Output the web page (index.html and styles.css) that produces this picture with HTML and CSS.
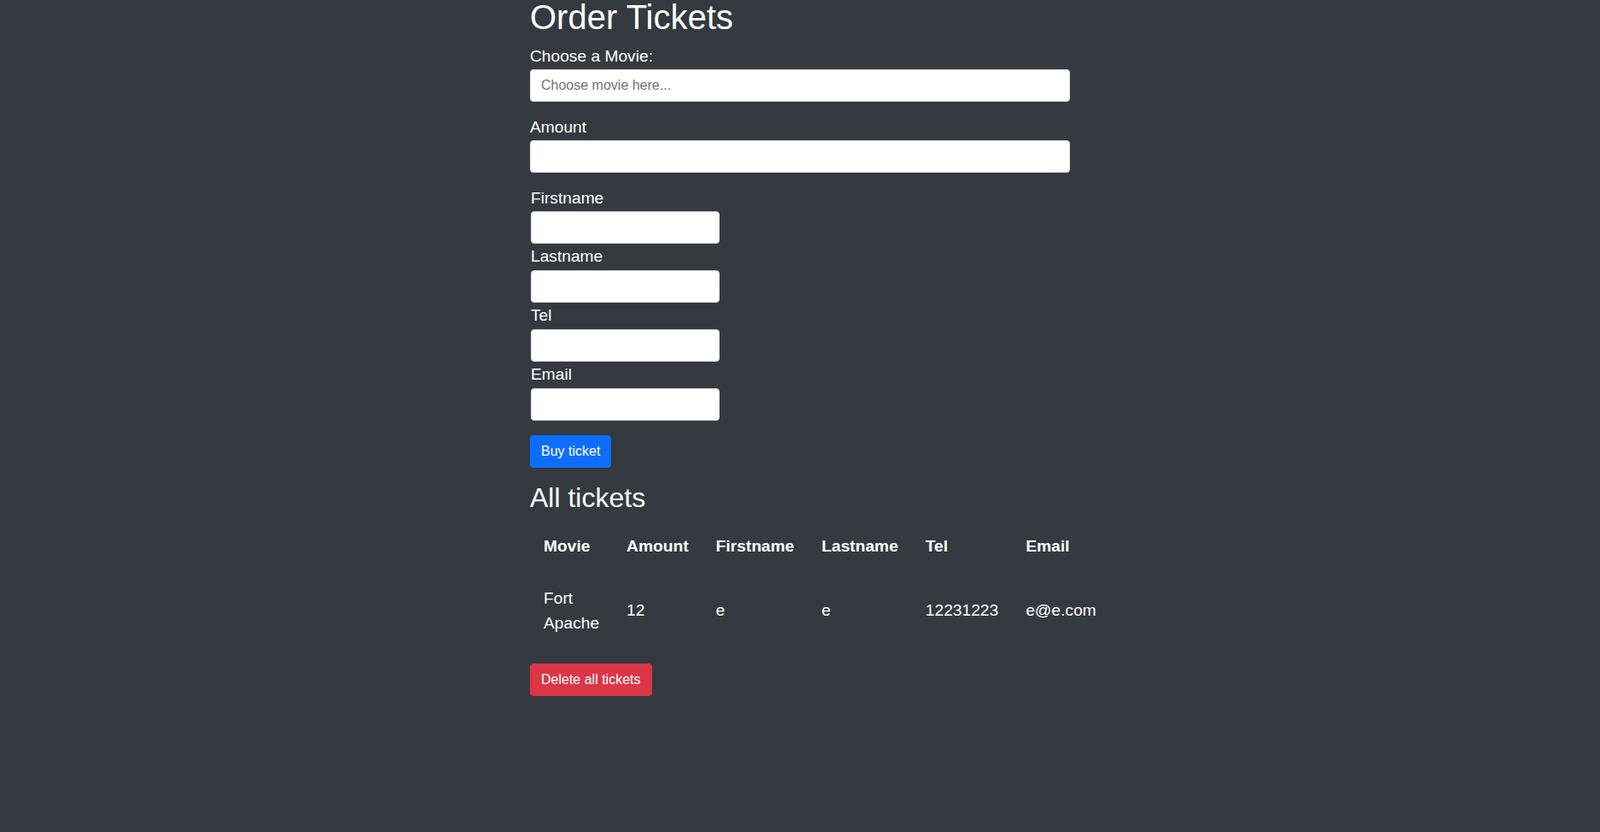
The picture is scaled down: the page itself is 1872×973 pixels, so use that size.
FILE: index.html
```html
<!DOCTYPE html>
<html lang="en">
<head>
<meta charset="utf-8">
<title>Order Tickets</title>
<link rel="stylesheet" href="styles.css">
</head>
<body>
<div class="page">
  <h1 class="title">Order Tickets</h1>

  <div class="group">
    <label class="label" for="movie">Choose a Movie:</label>
    <input class="field" id="movie" type="text" placeholder="Choose movie here...">
  </div>

  <div class="group">
    <label class="label" for="amount">Amount</label>
    <input class="field" id="amount" type="number">
  </div>

  <div class="person">
    <label class="label" for="firstname">Firstname</label>
    <input class="field small" id="firstname" type="text">
    <label class="label" for="lastname">Lastname</label>
    <input class="field small" id="lastname" type="text">
    <label class="label" for="tel">Tel</label>
    <input class="field small" id="tel" type="text">
    <label class="label" for="email">Email</label>
    <input class="field small" id="email" type="text">
  </div>

  <button class="btn btn-buy" type="button">Buy ticket</button>

  <h2 class="subtitle">All tickets</h2>

  <table class="tickets">
    <thead>
      <tr>
        <th>Movie</th>
        <th>Amount</th>
        <th>Firstname</th>
        <th>Lastname</th>
        <th>Tel</th>
        <th>Email</th>
      </tr>
    </thead>
    <tbody>
      <tr>
        <td>Fort Apache</td>
        <td>12</td>
        <td>e</td>
        <td>e</td>
        <td>12231223</td>
        <td>e@e.com</td>
      </tr>
    </tbody>
  </table>

  <button class="btn btn-delete" type="button">Delete all tickets</button>
</div>
</body>
</html>
```

FILE: styles.css
```css
html, body {
  margin: 0;
  padding: 0;
  background: #343a40;
}

body {
  font-family: "Liberation Sans", Arial, sans-serif;
  font-size: 19.2px;
  line-height: 1.5;
  color: #ffffff;
}

.page {
  width: 632px;
  margin: 0 auto;
}

.title {
  font-size: 40px;
  font-weight: 500;
  line-height: 1.2;
  margin: -4px 0 8px;
}

.group {
  margin-bottom: 16px;
}

.label {
  display: block;
}

.field {
  display: block;
  box-sizing: border-box;
  width: 100%;
  height: 38px;
  padding: 6px 12px;
  font-family: "Liberation Sans", Arial, sans-serif;
  font-size: 16px;
  line-height: 1.5;
  color: #212529;
  background: #ffffff;
  border: 1px solid #ced4da;
  border-radius: 4px;
  outline: none;
}

.field::placeholder {
  color: #6c757d;
}

.person {
  width: 221px;
  padding-left: 1px;
  margin-bottom: 17px;
}

.person .field {
  margin: 1px 0;
}

.btn {
  display: block;
  box-sizing: border-box;
  height: 38px;
  padding: 6px 12px;
  font-family: "Liberation Sans", Arial, sans-serif;
  font-size: 16px;
  line-height: 1.5;
  color: #ffffff;
  border: 1px solid transparent;
  border-radius: 4px;
  cursor: pointer;
}

.btn-buy {
  background: #0d6efd;
  border-color: #0d6efd;
  margin-bottom: 16px;
}

.btn-delete {
  background: #dc3545;
  border-color: #dc3545;
}

.subtitle {
  font-size: 32px;
  font-weight: 500;
  line-height: 1.2;
  margin: 0 0 8px;
}

.tickets {
  width: 100%;
  border-collapse: collapse;
  margin-bottom: 16px;
}

.tickets th,
.tickets td {
  padding: 16px;
  text-align: left;
  vertical-align: middle;
}

.tickets th {
  font-weight: 700;
}
```
